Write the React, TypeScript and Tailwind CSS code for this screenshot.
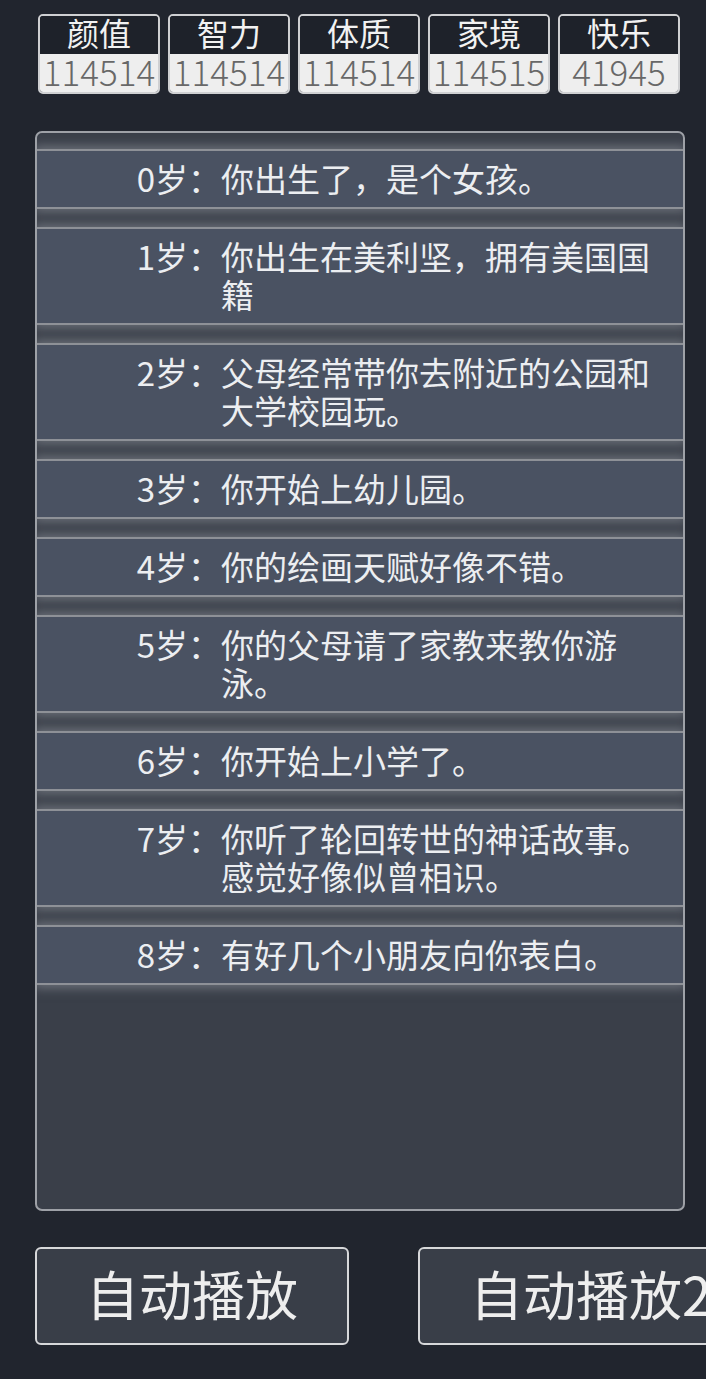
const font = { fontFamily: '"Noto Sans CJK SC", "Noto Sans", sans-serif' }

const stats = [
  { label: '颜值', value: 114514 },
  { label: '智力', value: 114514 },
  { label: '体质', value: 114514 },
  { label: '家境', value: 114515 },
  { label: '快乐', value: 41945 },
]

const events = [
  { age: 0, text: '你出生了，是个女孩。' },
  { age: 1, text: '你出生在美利坚，拥有美国国籍' },
  { age: 2, text: '父母经常带你去附近的公园和大学校园玩。' },
  { age: 3, text: '你开始上幼儿园。' },
  { age: 4, text: '你的绘画天赋好像不错。' },
  { age: 5, text: '你的父母请了家教来教你游泳。' },
  { age: 6, text: '你开始上小学了。' },
  { age: 7, text: '你听了轮回转世的神话故事。感觉好像似曾相识。' },
  { age: 8, text: '有好几个小朋友向你表白。' },
]

function StatCard({ label, value }: { label: string; value: number }) {
  return (
    <div className="w-[122px] shrink-0 overflow-hidden rounded-[5px] border-2 border-[#cfd0d2]">
      <div className="flex h-[38px] items-center justify-center bg-[#1e222a] pb-[6px] text-[32px] leading-none text-[#f2f2f2]">
        {label}
      </div>
      <div className="flex h-[38px] items-center justify-center bg-[#eeeeee] pb-[6px] text-[35px] font-light leading-none text-[#686868]">
        {value}
      </div>
    </div>
  )
}

function EventRow({ age, text }: { age: number; text: string }) {
  return (
    <li className="flex items-start border-y-2 border-[#8e9197] bg-[#4a5262] pt-[8px] pb-[10px] text-[33px] leading-[38px] text-[#eceef1] shadow-[0_0_10px_3px_rgba(118,122,130,0.85)]">
      <span className="w-[184px] shrink-0 text-right">{age}岁：</span>
      <span className="w-[440px]">{text}</span>
    </li>
  )
}

export default function App() {
  return (
    <div className="min-h-[1379px] w-[706px] overflow-hidden bg-[#21252e]" style={font}>
      <div className="flex gap-[8px] pl-[38px] pt-[14px]">
        {stats.map((s) => (
          <StatCard key={s.label} {...s} />
        ))}
      </div>

      <div className="ml-[35px] mt-[37px] h-[1080px] w-[650px] overflow-hidden rounded-[7px] border-2 border-[#9ea1a7] bg-[#3a3f49]">
        <ul className="flex flex-col gap-[18px] pt-[16px]">
          {events.map((e) => (
            <EventRow key={e.age} {...e} />
          ))}
        </ul>
      </div>

      <div className="mt-[36px] flex gap-[69px] pl-[35px]">
        <button className="h-[98px] w-[314px] shrink-0 rounded-[6px] border-2 border-[#d7d8da] bg-[#393e48] pb-[4px] text-[53px] text-[#eeeeee]">
          自动播放
        </button>
        <button className="h-[98px] w-[314px] shrink-0 whitespace-nowrap rounded-[6px] border-2 border-[#d7d8da] bg-[#393e48] pb-[4px] pl-[50px] text-left text-[53px] text-[#eeeeee]">
          自动播放2
        </button>
      </div>
    </div>
  )
}
